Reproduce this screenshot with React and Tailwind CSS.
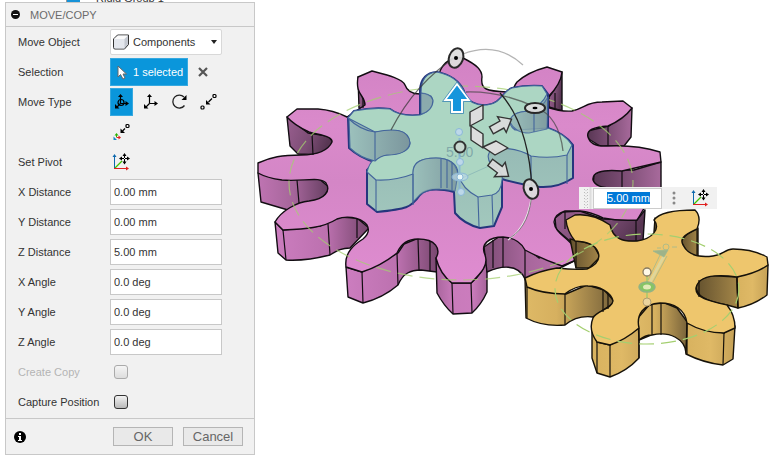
import { useEffect, useRef, useState } from "react";

function Row({ label, htmlFor, muted, children }) {
  return (
    <div className="flex h-[30px] items-center pl-3">
      <label htmlFor={htmlFor} className={muted ? "w-[92px] shrink-0 text-[#b4b4b4]" : "w-[92px] shrink-0 text-[#333]"}>
        {label}
      </label>
      {children}
    </div>
  );
}

function ValueField({ label, id, initial }) {
  return (
    <Row label={label} htmlFor={id}>
      <input id={id} defaultValue={initial} className="h-[26px] w-28 border border-[#c8c8c8] bg-white px-[3px] text-[#333] outline-none" />
    </Row>
  );
}

function PivotIcon() {
  return (
    <svg width="18" height="18" viewBox="0 0 18 18" fill="none" aria-hidden="true">
      <path d="M2.500 15V3" stroke="#0d68ad" />
      <path d="M.5 4h4L2.500 1z" fill="#0d68ad" />
      <path d="M3 15L10 8" stroke="#3fc400" strokeWidth="1.200" />
      <path d="M2 15.500h13" stroke="#e02020" />
      <path d="M14 13.500v4L17 15.500z" fill="#e02020" />
      <path d="M12.500 2v8M8.500 5.500h8" stroke="#000" />
      <path d="M10.500 3l2-3 2 3zM10.500 8.500l2 3 2-3zM10 3.500l-3 2 3 2zM15 3.500l3 2-3 2z" fill="#000" />
      <rect x="12" y="5" width="1" height="1" fill="#fff" />
    </svg>
  );
}

function AxesIcon({ ring }) {
  return (
    <svg width="18" height="18" viewBox="0 0 18 18" fill="none" stroke="#000" aria-hidden="true">
      <path d="M7.500 10V3M7.500 10.500h6M7.500 10.500L4 14" strokeWidth="1.200" />
      <path d="M5 4l2.500-3L10 4zM12.500 8l3.500 2.500L12.500 13zM2 11v4.500h4.500z" fill="#000" stroke="none" />
      {ring && <circle cx="8" cy="9.500" r="3" strokeWidth="1.200" />}
    </svg>
  );
}

function RotateIcon() {
  return (
    <svg width="18" height="18" viewBox="0 0 18 18" fill="none" aria-hidden="true">
      <path d="M13 4A6.500 6.500 0 1 0 13.500 12.500" stroke="#222" strokeWidth="1.300" />
      <path d="M15.500 2v5h-5z" fill="#000" />
    </svg>
  );
}

function PointIcon() {
  return (
    <svg width="18" height="18" viewBox="0 0 18 18" fill="none" aria-hidden="true">
      <rect x="1" y="13" width="3" height="3" rx="1" stroke="#000" strokeWidth="1.200" />
      <rect x="13" y="1.500" width="3" height="3" rx="1" stroke="#000" strokeWidth="1.200" />
      <path d="M12 5.500L8.500 9" stroke="#000" strokeWidth="1.300" />
      <path d="M6 7v4.500h4.500z" fill="#000" />
    </svg>
  );
}

function PointToPositionIcon() {
  return (
    <svg width="18" height="18" viewBox="0 0 18 18" fill="none" aria-hidden="true">
      <rect x="13" y="1.500" width="3" height="3" rx="1" stroke="#000" strokeWidth="1.200" />
      <path d="M12 5.500L9.500 8" stroke="#000" strokeWidth="1.300" />
      <path d="M7.500 5.500V10H12z" fill="#000" />
      <path d="M3.500 14v-3" stroke="#2ab400" />
      <path d="M1.500 12.500l2-2.500 2 2.500z" fill="#2ab400" />
      <path d="M3.500 14.500H6" stroke="#e02020" />
      <path d="M5.500 12.500l2.500 2-2.500 2z" fill="#e02020" />
      <path d="M.5 13.500V17H4z" fill="#1687c8" />
    </svg>
  );
}

function MoveHandle({ x, y, angle }) {
  return (
    <path
      d="M-11 -4H1V-9L12 0L1 9V4H-11z"
      transform={`translate(${x} ${y}) rotate(${angle})`}
      fill="#dcdcdc"
      fillOpacity=".93"
      stroke="#333"
      strokeWidth="1.400"
    />
  );
}

function GearModel() {
  return (
    <svg viewBox="255 0 528 459" preserveAspectRatio="xMinYMin meet" className="block w-full" role="img" aria-label="Gear assembly">
      <defs>
        <linearGradient id="pinkTop" x1="0" y1="0" x2="0" y2="1">
          <stop offset="0" stopColor="#d282c4" />
          <stop offset=".3" stopColor="#da8acb" />
          <stop offset=".55" stopColor="#d486c6" />
          <stop offset="1" stopColor="#df8cd0" />
        </linearGradient>
        <linearGradient id="pinkDark" x1="0" y1="0" x2="1" y2=".3">
          <stop offset="0" stopColor="#9a5f90" />
          <stop offset=".6" stopColor="#7c4d75" />
          <stop offset="1" stopColor="#583653" />
        </linearGradient>
        <linearGradient id="pinkShade" x1="0" y1="0" x2="1" y2="0">
          <stop offset="0" stopColor="#583653" />
          <stop offset=".4" stopColor="#774a70" />
          <stop offset="1" stopColor="#a86a9c" />
        </linearGradient>
        <linearGradient id="pinkSide" x1="0" y1="0" x2="1" y2="0">
          <stop offset="0" stopColor="#bf74b2" />
          <stop offset=".5" stopColor="#a5659a" />
          <stop offset="1" stopColor="#633d5f" />
        </linearGradient>
        <linearGradient id="pinkNear" x1="0" y1="0" x2="1" y2="0">
          <stop offset="0" stopColor="#cc7dbf" />
          <stop offset=".55" stopColor="#bc71af" />
          <stop offset="1" stopColor="#75456c" />
        </linearGradient>
        <linearGradient id="pinkTooth" x1="0" y1="0" x2="1" y2="0">
          <stop offset="0" stopColor="#a9659d" />
          <stop offset=".35" stopColor="#c97bbb" />
          <stop offset=".7" stopColor="#cb7cbd" />
          <stop offset="1" stopColor="#a7649b" />
        </linearGradient>
        <linearGradient id="pinkRight" x1="0" y1="0" x2="1" y2="0">
          <stop offset="0" stopColor="#7e4d76" />
          <stop offset=".45" stopColor="#a7669b" />
          <stop offset="1" stopColor="#bd74b0" />
        </linearGradient>
        <linearGradient id="goldSide" x1="0" y1="0" x2="1" y2="0">
          <stop offset="0" stopColor="#deb966" />
          <stop offset=".35" stopColor="#d6b05f" />
          <stop offset="1" stopColor="#766139" />
        </linearGradient>
        <linearGradient id="goldNear" x1="0" y1="0" x2="1" y2="0">
          <stop offset="0" stopColor="#d8b25f" />
          <stop offset=".5" stopColor="#dfb966" />
          <stop offset="1" stopColor="#c5a156" />
        </linearGradient>
        <linearGradient id="goldDark" x1="0" y1="0" x2="1" y2="0">
          <stop offset="0" stopColor="#63512e" />
          <stop offset="1" stopColor="#a48648" />
        </linearGradient>
        <linearGradient id="tealSide" x1="0" y1="0" x2="0" y2="1">
          <stop offset="0" stopColor="#8caeae" />
          <stop offset="1" stopColor="#a2c8bd" />
        </linearGradient>
        <linearGradient id="tealDark" x1="0" y1="0" x2="1" y2="0">
          <stop offset="0" stopColor="#9cc1bc" />
          <stop offset="1" stopColor="#7b969d" />
        </linearGradient>
      </defs>

      {/* large driven gear: side walls, then the top face */}
      <g stroke="#120d12" strokeWidth="1.400" strokeLinejoin="round">
        <path fill="url(#pinkDark)" d="M358 77L359 108L376 110L373 101L365 96Z" />
        <path fill="url(#pinkDark)" d="M287 117L290 146L298 154L325 155L333 142L328 136L308 133Z" />
        <path fill="url(#pinkSide)" d="M258 173L261 202L288 210L322 199L330 188L318 178L290 179Z" />
        <path fill="url(#pinkNear)" d="M275 222L278 253L286 260C302 261 318 258 330 255C338 250 342 248 350 248L369 228L357 218L338 217L320 226L283 230Z" />
        <path fill="url(#pinkNear)" d="M346 267L348 297L363 303C379 299 391 291 398 285C403 273 411 270 421 270L437 272L440 244L421 237L404 244L398 253L362 272Z" />
        <path fill="url(#pinkTooth)" d="M436 258L437 293Q444 306 453 314L472 313Q481 305 487 292V258Q484 272 471 283H452Q441 272 436 258Z" />
        <path fill="url(#pinkRight)" d="M484 247L487 272C500 266 518 263 525 279L527 284L562 267L576 260V240L539 258L515 239L500 236Z" />
        <path fill="url(#pinkDark)" d="M562 72L562 111L549 107V97Q560 83 562 72Z" />
        <path fill="url(#pinkShade)" d="M632 108L631 137L624 146H600L587 138V131L609 126Z" />
        <path fill="url(#pinkShade)" d="M661 162V196Q643 202 615 202L593 188L594 174L604 170L634 170Z" />
        <path fill="url(#pinkDark)" d="M563 212L555 218L556 229L572 243L643 241L645 210L637 220L603 219L580 211Z" />
        <path
          fill="url(#pinkTop)"
          d="M287 117L297 109H318Q333 110 347 117L365 105C365 95 355 95 358 77L372 71C383 74 402 78 405 85Q408 94 420 94H440V71Q447 56 463 58C477 65 482 70 482 77C480 90 487 91 507 92C514 92 513 87 517 82Q528 72 547 67L562 72Q561 84 548 97L546 107Q562 112 572 111C585 108 586 102 602 102L623 101L632 108Q624 119 608 126C594 127 586 130 588 137Q591 147 607 146C627 145 644 147 660 152L661 162L622 171C600 169 592 173 593 180Q596 188 612 188L661 189L643 210Q639 217 637 220Q618 221 603 218Q591 212 580 211H565Q555 214 554 222C555 233 567 237 573 246L576 260L562 266Q542 259 525 250Q519 238 503 237C489 237 480 244 485 255C489 266 480 274 471 283H452Q440 274 436 258C441 249 436 239 418 239Q403 239 397 253Q381 266 362 272L346 267C344 252 355 244 363 239Q371 232 367 225C359 216 345 216 337 219C323 228 305 229 283 230L275 222C281 211 297 202 309 201C325 199 331 191 326 183C320 176 302 182 282 180Q267 178 258 173V163C271 157 282 155 301 155Q326 155 332 142C333 136 319 135 309 132Q294 125 287 117Z"
        />
        <path fill="none" strokeWidth="1.200" d="M363 98V108M312 134L313 155M297 180L299 203M283 230L286 260M328 224L330 255M357 219V238M362 272L363 303M397 253L398 285M418 239L419 270M430 241V271M452 283L453 314M471 283L472 313M493 240V268M503 237V267M525 250V278M555 93V108M608 126V146M622 171V188M565 212V229M636 220V241" />
      </g>

      {/* pinion */}
      <g stroke="#16120a" strokeWidth="1.400" strokeLinejoin="round">
        <path fill="url(#goldDark)" d="M570 239L576 268H589L600 257L593 244Z" />
        <path fill="#6b5934" d="M655 218L660 228L654 232Z" />
        <path fill="url(#goldDark)" d="M698 228V257L687 252L681 241L687 234Z" />
        <path fill="url(#goldSide)" d="M525 278L526 318Q543 327 565 325Q577 315 593 317L615 302L604 290L587 285L566 294Z" />
        <path fill="url(#goldNear)" d="M592 327V358L597 373L610 377Q627 371 639 358V340L651 335V304L638 313L639 328L610 345L597 342Z" />
        <path fill="url(#goldSide)" d="M638 318L639 340Q645 335 652 335C670 331 685 339 686 353L688 323L677 308L665 303L650 304Z" />
        <path fill="url(#goldNear)" d="M687 323L686 354Q704 363 723 365L733 359L735 326L724 333Z" />
        <path fill="url(#goldDark)" d="M737 277L738 308L727 305C704 301 696 295 696 286L702 275Z" />
        <path fill="url(#goldNear)" d="M768 265L767 295Q754 305 738 308L737 277Z" />
        <path fill="#eec66d" d="M566 220L575 215Q593 213 610 225C613 239 623 242 637 241C652 239 661 229 654 220Q661 210 695 210Q702 217 697 229C682 236 680 239 683 245Q690 259 713 256C723 255 725 249 733 249Q752 249 767 257L768 265Q757 273 737 277C709 273 698 278 696 288C695 298 709 301 727 305Q735 315 735 328L724 333Q704 333 687 323C685 309 674 303 660 303C643 304 636 315 639 328Q625 340 610 345L597 342Q588 330 593 318C596 311 612 309 613 301C611 292 599 286 588 286C576 285 569 291 565 294Q543 294 527 287L525 278Q539 271 557 268Q574 270 587 269Q602 262 598 252Q594 242 575 241Q567 231 566 220Z" />
        <path fill="none" strokeWidth="1.200" d="M576 241V268M697 229V256M527 287V318M565 294V325M603 290V312M608 293V309M597 342V373M610 345V377M639 328V358M652 304V335M661 303V335M687 323V354M724 333L723 365M737 277L738 308M699 280V297" />
      </g>

      {/* pitch circles */}
      <g fill="none" stroke="#a4cf70" strokeWidth="1.200" strokeDasharray="15 7">
        <ellipse cx="461" cy="183" rx="172" ry="97" strokeOpacity=".75" />
        <ellipse cx="647" cy="289" rx="92" ry="55" />
      </g>

      {/* selected idler */}
      <path
        fill="url(#tealSide)"
        stroke="#25367d"
        strokeWidth="2"
        strokeLinejoin="round"
        d="M348 118L354 111Q373 107 390 109Q400 117 420 115V90Q421 73 437 72Q457 76 464 91C466 102 477 106 487 105C501 104 503 91 512 88Q526 85 542 86L548 94V128Q565 134 573 145V178Q558 188 540 187Q518 184 502 179V207L494 226L480 228Q464 224 455 213L454 192Q428 186 420 195C411 208 406 209 377 212L367 204V170L375 162Q360 158 349 148Z"
      />
      <g stroke="#43659c" strokeWidth="1.100" strokeLinejoin="round">
        <path fill="#acd6c3" d="M348 118L354 111Q373 107 390 109Q400 117 420 115C432 111 435 101 431 96L421 93Q421 73 437 72Q457 76 464 91C466 102 477 106 487 105C501 104 503 91 512 88Q526 85 542 86L547 94Q542 105 529 111C508 112 506 124 515 130L548 128Q565 134 572 145L567 155Q550 159 531 156Q518 148 497 148C486 150 487 159 491 164Q504 172 502 180Q501 193 492 195L478 197Q462 189 458 174C458 163 448 158 436 158C416 158 413 165 413 174Q395 181 376 180L367 172Q371 155 387 155C407 153 410 148 410 143C408 127 390 130 375 132Z" />
        <path fill="url(#tealDark)" d="M349 119Q360 130 375 132C394 128 409 129 410 143C408 153 397 155 387 155Q380 156 375 161Q360 158 350 148Z" />
        <path fill="url(#tealDark)" d="M413 174C412 162 422 158 436 158Q455 158 458 174L455 191Q430 186 420 195L413 202Z" opacity=".8" />
        <path fill="#8aa9ad" d="M421 93Q430 93 433 100Q433 111 421 114Z" opacity=".8" />
        <path fill="url(#tealDark)" d="M548 97Q542 109 529 111Q510 112 510 122Q515 133 529 133L547 129Z" opacity=".8" />
        <path fill="none" d="M375 132V160M376 180V211M413 174V205M441 159V188M447 160V188M452 163V190M478 197L479 227M492 195L493 225M531 156V186M567 155V184M534 111V132" />
      </g>
      <path d="M460 179L491 165" fill="none" stroke="#78a7b0" strokeOpacity=".55" />

      {/* rotation rings */}
      <g fill="none" strokeWidth="1.300">
        <path d="M391 130Q416 82 456 57" stroke="#333" strokeOpacity=".7" />
        <path d="M463 54Q497 41 523 65" stroke="#777" strokeOpacity=".55" />
        <path d="M466 92Q501 91 535 107Q559 116 563 151" stroke="#444" strokeOpacity=".7" />
        <path d="M500 93C520 115 530 150 532 189" stroke="#222" />
        <path d="M532 189Q530 225 508 240" stroke="#eee" />
        <path d="M532 189Q531 225 510 238" stroke="#555" strokeOpacity=".7" strokeWidth="1" />
      </g>
      <g fill="#ddd" fillOpacity=".94" stroke="#292929" strokeWidth="2">
        <ellipse cx="456" cy="58" rx="7" ry="10" transform="rotate(20 456 58)" />
        <ellipse cx="535" cy="108" rx="10" ry="5" />
        <ellipse cx="531" cy="189" rx="7" ry="10" transform="rotate(-20 531 189)" />
      </g>
      <circle cx="456" cy="58" r="2" fill="#000" />
      <ellipse cx="535" cy="108" rx="2.500" ry="1.300" fill="#000" />
      <circle cx="531" cy="189" r="2" fill="#000" />

      {/* triad handles */}
      <text x="446" y="157" fontSize="14" fontFamily="Liberation Sans, Arial, sans-serif" fill="#688e9a" fillOpacity=".65">5.00</text>
      <path d="M459.500 138V192" stroke="#7caed8" strokeWidth="2" strokeOpacity=".7" />
      <path d="M457 84L469 100H462V112H452V100H445Z" fill="#1595dc" stroke="#fff" strokeWidth="2" />
      <path d="M457 82L471.500 101.500H463.500V113.500H450.500V101.500H442.500Z" fill="none" stroke="#3a86b5" strokeWidth=".8" />
      <g fill="#ddd" stroke="#333" strokeWidth="1.400" strokeLinejoin="round">
        <path d="M470 112L483 105V119L470 126Z" />
        <path d="M471 126L483 134V148L471 140Z" />
        <path d="M483 147L496 141L508 148L495 155Z" />
      </g>
      <MoveHandle x={501} y={125} angle={-29} />
      <MoveHandle x={499} y={169} angle={37} />
      <g fill="#bdd8e9" stroke="#8bb8d7">
        <circle cx="459" cy="132" r="3.500" />
        <circle cx="460" cy="162" r="3.500" />
        <ellipse cx="460" cy="177" rx="8" ry="4" fillOpacity=".65" />
        <circle cx="460" cy="177" r="3" fill="#e8f8f8" />
        <circle cx="461" cy="192" r="3.500" />
      </g>
      <circle cx="460" cy="147" r="5.500" fill="#c7d7cf" stroke="#333" strokeWidth="2" />

      {/* joint glyph */}
      <g stroke="#9cb890" strokeOpacity=".75" fill="none">
        <path d="M647 272V302" stroke="#8fcb69" strokeWidth="1.500" />
        <path d="M650 282L664 256" stroke="#d9dba9" strokeWidth="3" />
        <path d="M648 280L660 255M653 282L667 256" />
        <path d="M653 251L668 250L664 257Z" fill="#9eb389" />
        <path d="M657 248H661M672 247H677" />
        <circle cx="666" cy="247" r="3" />
      </g>
      <ellipse cx="647" cy="287" rx="8" ry="5" fill="#86c565" stroke="#91b384" strokeWidth="1.500" />
      <ellipse cx="647" cy="287" rx="4" ry="2.500" fill="#e2ebb8" />
      <circle cx="647" cy="272" r="4" fill="#fff9e6" stroke="#887b60" strokeWidth="1.300" />
      <circle cx="647" cy="302" r="4" fill="#ead49d" stroke="#b29d6f" />
    </svg>
  );
}

export default function App() {
  const distance = useRef(null);
  const [moveType, setMoveType] = useState("free");
  const types = [
    ["free", "Free Move", <AxesIcon key="f" ring />],
    ["translate", "Translate", <AxesIcon key="t" />],
    ["rotate", "Rotate", <RotateIcon key="r" />],
    ["point", "Point to Point", <PointIcon key="p" />],
    ["position", "Point to Position", <PointToPositionIcon key="o" />],
  ];

  useEffect(() => {
    distance.current.focus();
    distance.current.select();
  }, []);

  return (
    <main className="min-h-screen overflow-hidden bg-white font-['Liberation_Sans',Arial,sans-serif] text-[11px] leading-4">
      <div className="flex items-start">
        <div className="ml-[5px] w-[250px] shrink-0">
          <div className="flex h-[2px] items-end overflow-hidden pl-[61px]">
            <span className="mr-4 h-[2px] w-[14px] border-l border-[#999] bg-[#1692d8]" />
            <span className="h-3 text-[#333]">Rigid Group 1</span>
          </div>
          <form className="border border-[#c8c8c8] bg-[#f1f1f1]" onSubmit={(e) => e.preventDefault()}>
            <header className="flex h-6 items-center border-b border-[#c8c8c8] pl-[5px] text-[#6b6b6b]">
              <button type="button" aria-label="Collapse" className="mr-[10px] flex size-[9px] items-center justify-center rounded-full bg-[#111]">
                <span className="h-px w-[5px] bg-white" />
              </button>
              <h1>MOVE/COPY</h1>
            </header>

            <div className="pb-px">
              <Row label="Move Object" htmlFor="object">
                <div className="relative w-28">
                  <select id="object" className="h-[26px] w-full appearance-none rounded-xs border border-[#d8d8d8] bg-white pl-[22px] text-[#333] outline-none">
                    <option>Components</option>
                    <option>Bodies</option>
                  </select>
                  <svg className="pointer-events-none absolute top-[5px] left-[3px]" width="16" height="16" viewBox="0 0 16 16" aria-hidden="true">
                    <path d="M.5 5L4.500 1H15.500V10.500L11.500 15H2Q.5 15 .5 13.500Z" fill="#c5c9d1" stroke="#333" />
                    <path d="M1 5H11.500V14.500H2.500Q1 14.500 1 13Z" fill="#e4e7ed" />
                    <path d="M1 5L5 1.500H15L11.500 5Z" fill="#fafafa" />
                  </svg>
                  <svg className="pointer-events-none absolute top-[11px] right-[5px]" width="6" height="4" viewBox="0 0 6 4" aria-hidden="true">
                    <path d="M0 0H6L3 4Z" fill="#222" />
                  </svg>
                </div>
              </Row>

              <Row label="Selection">
                <button type="button" className="flex h-7 w-[78px] items-center border border-[#36a9e0] bg-[#0a96db] pl-[6px] text-white">
                  <svg width="10" height="15" viewBox="0 0 10 15" className="mr-[6px]" aria-hidden="true">
                    <path d="M1 1V12L3.500 9.500L6 14L8 13L6 9H9.500Z" fill="#fff" stroke="#666" />
                  </svg>
                  1 selected
                </button>
                <button type="button" aria-label="Clear selection" className="ml-[10px]">
                  <svg width="10" height="10" viewBox="0 0 10 10" aria-hidden="true">
                    <path d="M1 1L9 9M9 1L1 9" stroke="#555" strokeWidth="2.200" />
                  </svg>
                </button>
              </Row>

              <div className="flex pl-3">
                <span className="w-[92px] shrink-0 py-[7px] text-[#333]">Move Type</span>
                <div role="group" aria-label="Move Type" className="grid grid-cols-[repeat(4,29px)] auto-rows-[30px] items-center">
                  {types.map(([id, label, icon]) => (
                    <button
                      key={id}
                      type="button"
                      aria-label={label}
                      aria-pressed={moveType === id}
                      onClick={() => setMoveType(id)}
                      className={moveType === id ? "flex h-7 w-[23px] items-center justify-center border border-[#36a9e0] bg-[#0a96db]" : "flex h-7 w-[23px] items-center justify-center"}
                    >
                      {icon}
                    </button>
                  ))}
                </div>
              </div>

              <Row label="Set Pivot">
                <button type="button" aria-label="Set Pivot" className="ml-[2px]">
                  <PivotIcon />
                </button>
              </Row>
              <ValueField label="X Distance" id="xd" initial="0.00 mm" />
              <ValueField label="Y Distance" id="yd" initial="0.00 mm" />
              <ValueField label="Z Distance" id="zd" initial="5.00 mm" />
              <ValueField label="X Angle" id="xa" initial="0.0 deg" />
              <ValueField label="Y Angle" id="ya" initial="0.0 deg" />
              <ValueField label="Z Angle" id="za" initial="0.0 deg" />
              <Row label="Create Copy" htmlFor="copy" muted>
                <input id="copy" type="checkbox" disabled className="ml-1 size-[14px] appearance-none rounded-[3px] border border-[#aaa] bg-linear-to-b from-[#f5f5f5] to-[#ddd]" />
              </Row>
              <Row label="Capture Position" htmlFor="capture">
                <input id="capture" type="checkbox" className="ml-1 size-[14px] appearance-none rounded-[3px] border border-[#333] bg-linear-to-b from-[#f3f3f3] to-[#b9b9b9] checked:to-[#0a96db]" />
              </Row>
            </div>

            <footer className="flex h-9 items-center border-t border-[#c8c8c8] pr-[11px] pl-2 text-[13px] text-[#666]">
              <button type="button" aria-label="Information" className="mr-auto">
                <svg width="12" height="12" viewBox="0 0 12 12" aria-hidden="true">
                  <circle cx="6" cy="6" r="6" fill="#000" />
                  <path d="M5 2h2v2H5zM4 5h3v4h1v1H4V9h1V6H4z" fill="#fff" />
                </svg>
              </button>
              <button type="submit" className="mr-[10px] h-[19px] w-[60px] border border-[#b5b5b5] bg-[#e9e9e9]">OK</button>
              <button type="button" className="h-[19px] w-[60px] border border-[#b5b5b5] bg-[#e9e9e9]">Cancel</button>
            </footer>
          </form>
        </div>

        <section aria-label="Canvas" className="relative min-w-0 flex-1">
          <GearModel />
          <div className="absolute top-[187px] left-[324px] flex h-[22px] w-[138px] items-center bg-[#f1f1f1]">
            <svg width="14" height="22" viewBox="0 0 14 22" aria-hidden="true">
              <path d="M5.500 2V21M8.500 2V21" stroke="#bbb" strokeDasharray="1 2" />
              <path d="M7 3V21" stroke="#ccc" strokeDasharray="1 2" />
              <path d="M11.500 0V22" stroke="#ddd" strokeWidth="2" />
            </svg>
            <input
              ref={distance}
              aria-label="Distance"
              defaultValue="5.00 mm"
              className="h-[21px] w-[69px] border border-[#ccc] bg-white pl-[13px] text-[#333] outline-none selection:bg-[#0078d7] selection:text-white"
            />
            <button type="button" aria-label="More" className="ml-[10px]">
              <svg width="4" height="14" viewBox="0 0 4 14" fill="#888" aria-hidden="true">
                <circle cx="2" cy="2" r="1.500" />
                <circle cx="2" cy="7" r="1.500" />
                <circle cx="2" cy="12" r="1.500" />
              </svg>
            </button>
            <button type="button" aria-label="Set Pivot" className="ml-[15px]">
              <PivotIcon />
            </button>
          </div>
        </section>
      </div>
    </main>
  );
}
